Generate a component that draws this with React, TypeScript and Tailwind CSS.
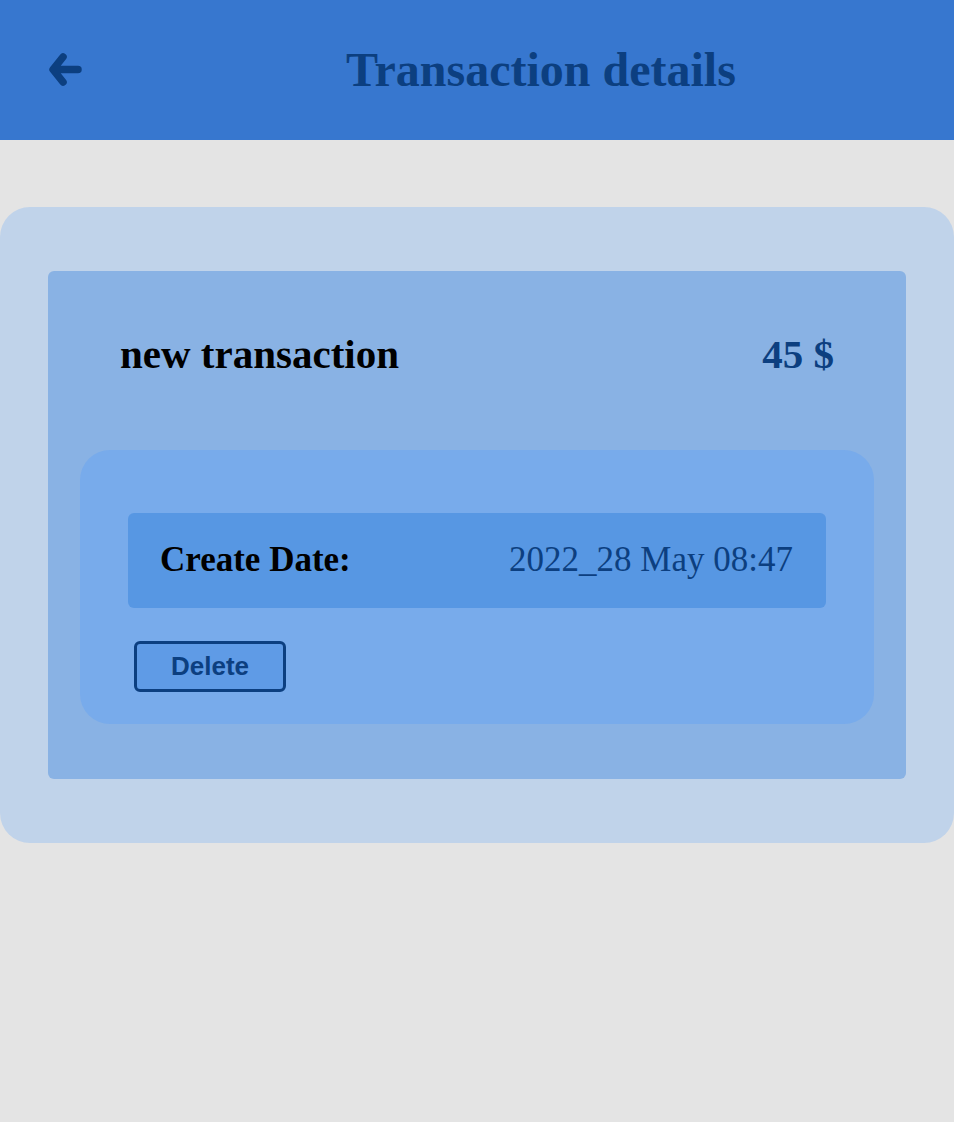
const serif = "font-['Liberation_Serif','Times_New_Roman',serif]"

export default function App() {
  return (
    <div className={`min-h-[1122px] bg-[#e4e4e4] ${serif}`}>
      {/* Header */}
      <div className="h-[140px] bg-[#3777cf] flex items-center">
        <div className="w-[128px] pl-[48px] flex items-center">
          <svg width="35" height="36" viewBox="0 0 35 36" className="text-[#0c3f80]">
            <path d="M15 5 L5 17.5 L15 30 M6 17.5 H30" fill="none" stroke="currentColor" strokeWidth="7.5" strokeLinecap="round" strokeLinejoin="round" />
          </svg>
        </div>
        <h1 className="flex-1 text-center text-[48px] font-bold text-[#0c3f80] leading-none">Transaction details</h1>
      </div>

      {/* Outer card */}
      <div className="mt-[67px] bg-[#c0d3ea] rounded-[30px] px-[48px] py-[64px]">
        <div className="bg-[#89b2e4] rounded-[6px] pb-[55px]">
          <div className="h-[179px] pb-[12px] flex items-center justify-between px-[72px] text-[41px] font-bold">
            <span className="text-black">new transaction</span>
            <span className="text-[#0c3f80]">45 $</span>
          </div>
          <div className="mx-[32px] bg-[#78abeb] rounded-[30px] px-[48px] pt-[63px] pb-[32px]">
            <div className="h-[95px] bg-[#5797e3] rounded-[6px] flex items-center justify-between pl-[32px] pr-[33px] text-[35px]">
              <span className="font-bold text-black">Create Date:</span>
              <span className="text-[#0c3f80]">2022_28 May 08:47</span>
            </div>
            <button className="mt-[33px] ml-[6px] h-[51px] w-[152px] border-[3px] border-[#0c3f80] rounded-[6px] bg-[#5f9be6] text-[#0c3f80] text-[26px] font-bold font-['Liberation_Sans',Arial,sans-serif] flex items-center justify-center">
              Delete
            </button>
          </div>
        </div>
      </div>
    </div>
  )
}
